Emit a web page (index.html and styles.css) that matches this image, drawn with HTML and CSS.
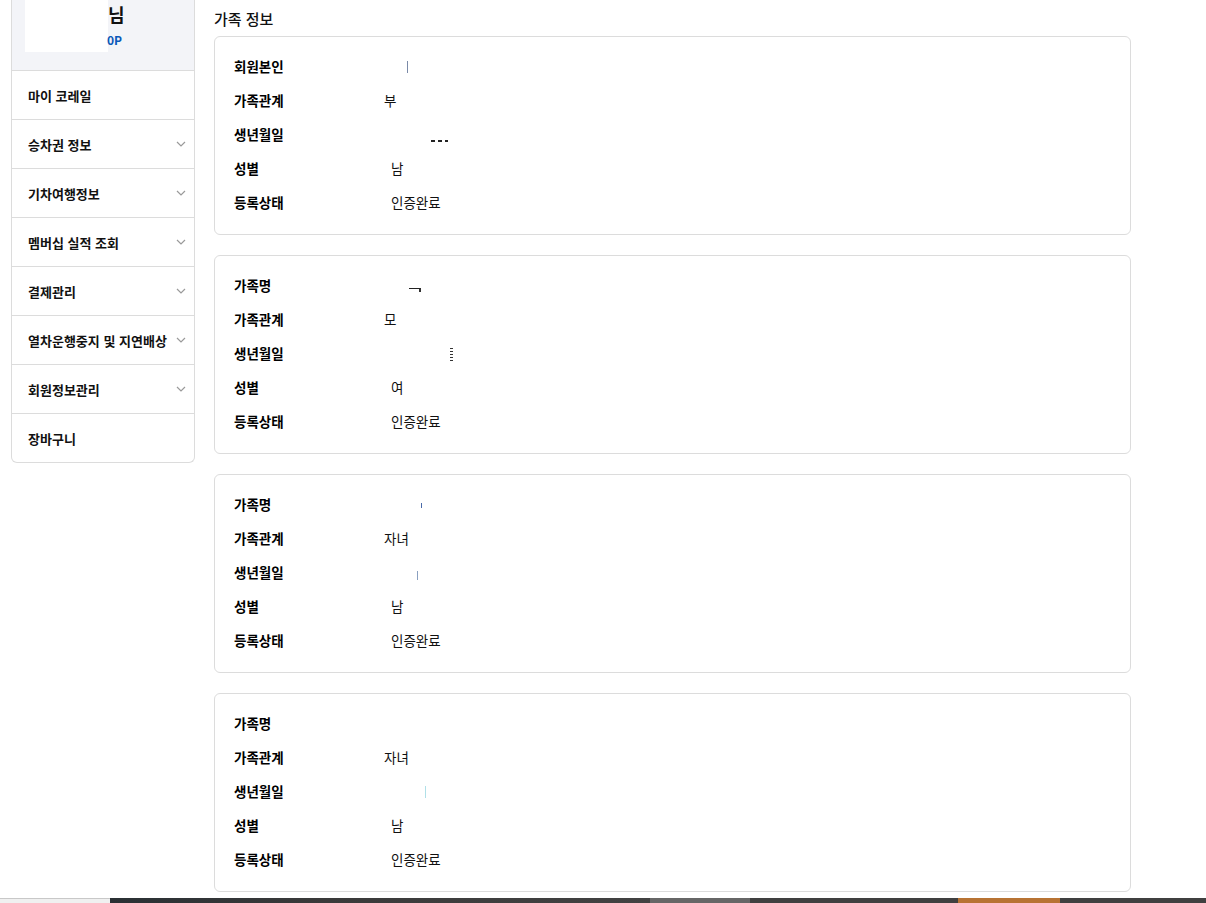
FILE: index.html
```html
<!DOCTYPE html>
<html lang="ko">
<head>
<meta charset="utf-8">
<link rel="stylesheet" href="styles.css">
</head>
<body>
<div class="page">
  <aside class="side">
    <div class="profile">
      <div class="mask"></div>
      <div class="pinfo">
        <div class="pname">님</div>
        <div class="pgrade">0P</div>
      </div>
    </div>
    <ul class="menu">
      <li class="mi">마이 코레일</li>
      <li class="mi">승차권 정보<svg class="chev" viewBox="0 0 10 6"><path d="M1 1l4 4 4-4"/></svg></li>
      <li class="mi">기차여행정보<svg class="chev" viewBox="0 0 10 6"><path d="M1 1l4 4 4-4"/></svg></li>
      <li class="mi">멤버십 실적 조회<svg class="chev" viewBox="0 0 10 6"><path d="M1 1l4 4 4-4"/></svg></li>
      <li class="mi">결제관리<svg class="chev" viewBox="0 0 10 6"><path d="M1 1l4 4 4-4"/></svg></li>
      <li class="mi">열차운행중지 및 지연배상<svg class="chev" viewBox="0 0 10 6"><path d="M1 1l4 4 4-4"/></svg></li>
      <li class="mi">회원정보관리<svg class="chev" viewBox="0 0 10 6"><path d="M1 1l4 4 4-4"/></svg></li>
      <li class="mi">장바구니</li>
    </ul>
  </aside>
  <main class="main">
    <h2 class="title">가족 정보</h2>
    <section class="card">
      <div class="row"><span class="lb">회원본인</span><span class="val"><i class="frag f1"></i></span></div>
      <div class="row"><span class="lb">가족관계</span><span class="val">부</span></div>
      <div class="row"><span class="lb">생년월일</span><span class="val"><i class="frag f2"></i></span></div>
      <div class="row"><span class="lb">성별</span><span class="val ind">남</span></div>
      <div class="row"><span class="lb">등록상태</span><span class="val ind">인증완료</span></div>
    </section>
    <section class="card">
      <div class="row"><span class="lb">가족명</span><span class="val"><i class="frag f3"></i></span></div>
      <div class="row"><span class="lb">가족관계</span><span class="val">모</span></div>
      <div class="row"><span class="lb">생년월일</span><span class="val"><i class="frag f4"></i></span></div>
      <div class="row"><span class="lb">성별</span><span class="val ind">여</span></div>
      <div class="row"><span class="lb">등록상태</span><span class="val ind">인증완료</span></div>
    </section>
    <section class="card">
      <div class="row"><span class="lb">가족명</span><span class="val"><i class="frag f5"></i></span></div>
      <div class="row"><span class="lb">가족관계</span><span class="val">자녀</span></div>
      <div class="row"><span class="lb">생년월일</span><span class="val"><i class="frag f6"></i></span></div>
      <div class="row"><span class="lb">성별</span><span class="val ind">남</span></div>
      <div class="row"><span class="lb">등록상태</span><span class="val ind">인증완료</span></div>
    </section>
    <section class="card">
      <div class="row"><span class="lb">가족명</span><span class="val"></span></div>
      <div class="row"><span class="lb">가족관계</span><span class="val">자녀</span></div>
      <div class="row"><span class="lb">생년월일</span><span class="val"><i class="frag f7"></i></span></div>
      <div class="row"><span class="lb">성별</span><span class="val ind">남</span></div>
      <div class="row"><span class="lb">등록상태</span><span class="val ind">인증완료</span></div>
    </section>
  </main>
</div>
<div class="taskbar">
  <div class="tb-light"></div>
  <div class="tb-dark"></div>
  <div class="tb-gray"></div>
  <div class="tb-dark2"></div>
  <div class="tb-orange"></div>
  <div class="tb-dark3"></div>
</div>
</body>
</html>
```
FILE: styles.css
```css
* { box-sizing: border-box; }
html, body { margin: 0; padding: 0; background: #fff; }
body {
  font-family: "Noto Sans CJK KR", "Noto Sans", sans-serif;
  color: #111;
}
.page {
  display: flex;
  align-items: flex-start;
  padding-left: 11px;
  gap: 19px;
}
.side {
  width: 184px;
  flex: none;
  border: 1px solid #dcdcdc;
  border-top: none;
  border-radius: 0 0 6px 6px;
  overflow: hidden;
}
.profile {
  height: 71px;
  background: #f3f4f8;
  border-bottom: 1px solid #dcdcdc;
  display: flex;
  align-items: flex-start;
  padding-left: 13px;
}
.mask {
  width: 83px;
  height: 52px;
  background: #fff;
  flex: none;
}
.pinfo { padding-top: 2px; }
.pname {
  font-size: 18px;
  font-weight: 700;
  line-height: 24px;
}
.pgrade {
  font-size: 12px;
  font-weight: 700;
  color: #0a58b8;
  line-height: 16px;
  margin-top: 6px;
  margin-left: -1px;
}
.menu { list-style: none; margin: 0; padding: 0; }
.mi {
  height: 49px;
  display: flex;
  align-items: center;
  justify-content: space-between;
  padding: 0 8px 0 16px;
  font-size: 13px;
  font-weight: 700;
  border-bottom: 1px solid #dcdcdc;
}
.mi:last-child { border-bottom: none; height: 48px; }
.chev { width: 10px; height: 6px; fill: none; stroke: #9a9a9a; stroke-width: 1.2; }
.main { width: 917px; flex: none; }
.title {
  margin: 0;
  font-size: 15px;
  font-weight: 500;
  line-height: 20px;
  padding-top: 9px;
  padding-bottom: 7px;
}
.card {
  border: 1px solid #dcdcdc;
  border-radius: 6px;
  padding: 12px 19px 15px 19px;
  margin-bottom: 20px;
}
.row {
  height: 34px;
  display: flex;
  align-items: center;
  font-size: 13.5px;
}
.lb { width: 150px; font-weight: 700; flex: none; color: #000; }
.val { position: relative; font-weight: 400; }
.val.ind { padding-left: 7px; }
.frag { position: absolute; display: block; }
.f1 { left: 23px; top: -5px; width: 1px; height: 12px; background: #7a8aa8; }
.f2 { left: 47px; top: 6px; width: 17px; height: 2px; background: repeating-linear-gradient(90deg, #222 0 4px, transparent 4px 7px); }
.f3 { left: 25px; top: 3px; width: 12px; height: 4px; border-top: 1px solid #222; border-right: 2px solid #333; }
.f4 { left: 66px; top: -5px; width: 3px; height: 14px; background: repeating-linear-gradient(180deg, #333 0 1px, transparent 1px 3px); }
.f5 { left: 37px; top: -1px; width: 1px; height: 5px; background: #4a6aa8; }
.f6 { left: 33px; top: -1px; width: 1px; height: 9px; background: #8aa0c0; }
.f7 { left: 41px; top: -5px; width: 1px; height: 12px; background: #b0e0e8; }
.taskbar {
  position: fixed;
  left: 0; right: 0; bottom: 0;
  height: 5px;
  display: flex;
}
.tb-light { width: 110px; background: #f0f0f0; border-top: 1px solid #c8c8c8; }
.tb-dark { width: 540px; background: linear-gradient(90deg, #2a3034, #3a3a3a 40%, #424242); }
.tb-gray { width: 100px; background: #666; }
.tb-dark2 { width: 208px; background: #404040; }
.tb-orange { width: 102px; background: #b87333; }
.tb-dark3 { flex: 1; background: #404040; }
```
